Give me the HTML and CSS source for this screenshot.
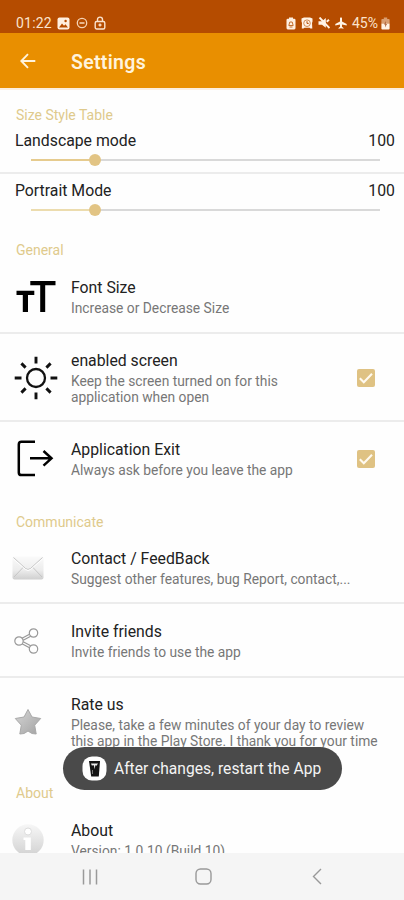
FILE: index.html
```html
<!DOCTYPE html>
<html lang="en">

<head>
    <meta charset="UTF-8">
    <meta name="viewport" content="width=device-width, initial-scale=1.0">
    <title>Settings</title>
    <link rel="stylesheet" href="styles.css">
</head>

<body>
    <div class="status">
        <span class="clock">01:22</span>
        <svg class="st-image" width="13" height="13" viewBox="0 0 13 13"><rect x="0.5" y="0.5" width="12" height="12" rx="2" fill="#fff0e0"/><path d="M2 10.5l3-4 2 2.2 1.5-1.5 2.5 3.3z" fill="#b54c00"/><circle cx="8.6" cy="4" r="1.2" fill="#b54c00"/></svg>
        <svg class="st-dnd" width="12" height="12" viewBox="0 0 12 12" fill="none" stroke="#f5d3b4" stroke-width="1.3"><circle cx="6" cy="6" r="4.7"/><path d="M3.5 6h5" stroke-width="1.6"/></svg>
        <svg class="st-lock" width="12" height="14" viewBox="0 0 12 14" fill="none" stroke="#fbe3cd" stroke-width="1.4"><rect x="1.2" y="5.5" width="9.6" height="7.5" rx="1.5"/><path d="M3.5 5.5V3.6a2.5 2.5 0 0 1 5 0v1.9M6 7.5v3M4.5 9h3"/></svg>
        <div class="status-right">
            <svg width="10" height="13" viewBox="0 0 10 13"><path d="M3 .5h4v1.300h1.200q1.300 0 1.300 1.300v8q0 1.400-1.300 1.400H1.800Q.5 12.500.5 11.100V3.100Q.5 1.800 1.800 1.800H3z" fill="#ffefe0"/><path d="M2.800 8.500l1-3.500h2.400l1 3.500zM3.500 10h3" fill="none" stroke="#c4702f" stroke-width="1"/></svg>
            <svg width="12" height="12" viewBox="0 0 12 12"><path d="M.5 1.500L3 .5h6l2.500 1v3L11 6l.3 5.500H9.500l-1-.7h-5l-1 .7H.8L1 6 .5 4.500z" fill="#fff3e6"/><circle cx="6" cy="6.200" r="3.300" fill="none" stroke="#c4702f" stroke-width=".8"/><path d="M6 4.200v2.200h1.700" fill="none" stroke="#b54c00" stroke-width="1"/></svg>
            <svg width="12" height="12" viewBox="0 0 12 12"><path d="M.5 4.200h3.500L7.800 1v9.800L4 7.800H.5z" fill="#fff3e6"/><path d="M1.500 .5l10 10.500M8.700 4.800l2.300-2" stroke="#fff3e6" stroke-width="1.900"/></svg>
            <svg width="12" height="12" viewBox="0 0 12 12"><path d="M5 1.200q1-1.700 2 0v3.300l4.700 2.500v1.500L7 7.500v2.200l1.500 1.200v.9L6 11.300l-2.500.5v-.9L5 9.700V7.500L.3 8.500V7L5 4.500z" fill="#fff3e6"/></svg>
            <span class="percent">45%</span>
            <svg class="st-battery" width="9" height="13" viewBox="0 0 9 13"><path d="M2.800.5h3.400v1.500H8q.6 0 .6 1v3.500H.4V3q0-1 .6-1h1.800z" fill="#d99d70"/><path d="M.4 6.500h8.200v5q0 1-.9 1H1.300q-.9 0-.9-1z" fill="#fff3e6"/><path d="M4.900 4L3 7.500h1.300L4 10.500 6 7H4.700z" fill="#a85a30"/></svg>
        </div>
    </div>

    <div class="header">
        <svg width="16" height="16" viewBox="0 0 16 16" fill="none" stroke="#fff3dc" stroke-width="1.900"><path d="M15.300 8H1.500M8 1.200L1.300 8 8 14.800"/></svg>
        <h1>Settings</h1>
    </div>

    <div class="content">
        <h2>Size Style Table</h2>
        <div class="size-row line">
            <div class="size-label"><span>Landscape mode</span><span class="num">100</span></div>
            <div class="slider"><div class="fill"></div><div class="knob"></div></div>
        </div>
        <div class="size-row second">
            <div class="size-label"><span>Portrait Mode</span><span class="num">100</span></div>
            <div class="slider pale"><div class="fill"></div><div class="knob"></div></div>
        </div>

        <h2>General</h2>
        <div class="row h74 line">
            <div class="icon"><svg width="40" height="32" viewBox="0 0 40 32"><path d="M14.300 0H39.500v4.200H29.200V31h-5V4.200h-9.900zM.5 9.800h17.800v4.200H12V31H6.800V14H.5z"/></svg></div>
            <div class="text"><h3>Font Size</h3><p>Increase or Decrease Size</p></div>
        </div>
        <div class="row h88 line">
            <div class="icon sun"><svg width="44" height="44" viewBox="0 0 44 44" fill="none" stroke="#111" stroke-width="2.900"><circle cx="22" cy="22" r="9" stroke-width="2.300"/><path d="M22 .7v6.800M22 36.500v6.800M.7 22h6.800M36.500 22h6.800M7.400 7.400l4.200 4.200M32.400 32.400l4.200 4.200M36.600 7.400l-4.200 4.200M11.600 32.400l-4.200 4.200"/></svg></div>
            <div class="text"><h3>enabled screen</h3><p>Keep the screen turned on for this<br>application when open</p></div>
            <div class="check"><svg width="18" height="18" viewBox="0 0 18 18" fill="none" stroke="#fffaf0" stroke-width="2.100"><path d="M2.800 9.200l4 4 8.200-8.400"/></svg></div>
        </div>
        <div class="row h75 last">
            <div class="icon exit"><svg width="37" height="37" viewBox="0 0 37 37" fill="none" stroke="#000" stroke-width="2.500"><path d="M18 1.700H4.500q-2.700 0-2.700 2.700v28q0 2.700 2.700 2.700H18M13 18.300h22M26.500 11l8 7.300-8 7.300"/></svg></div>
            <div class="text"><h3>Application Exit</h3><p>Always ask before you leave the app</p></div>
            <div class="check"><svg width="18" height="18" viewBox="0 0 18 18" fill="none" stroke="#fffaf0" stroke-width="2.100"><path d="M2.800 9.200l4 4 8.200-8.400"/></svg></div>
        </div>

        <h2>Communicate</h2>
        <div class="row h72 line">
            <div class="icon small">
                <svg width="32" height="24" viewBox="0 0 32 24">
                    <defs><linearGradient id="mail" x1="0" y1="0" x2="0" y2="1"><stop offset="0" stop-color="#fafafa"/><stop offset=".6" stop-color="#ececec"/><stop offset="1" stop-color="#cfcfcf"/></linearGradient></defs>
                    <rect x=".5" y=".5" width="31" height="23" rx="2" fill="url(#mail)"/>
                    <path d="M1.500 1.500L13.500 12.500q2.500 2 5 0L30.500 1.500M2 21l9.500-10M30 21l-9.500-10" fill="none" stroke="#c6c6c6"/>
                    <path d="M1.500 3L13.500 13.500q2.500 2 5 0L30.500 3" fill="none" stroke="#fff"/>
                </svg>
            </div>
            <div class="text"><h3>Contact / FeedBack</h3><p>Suggest other features, bug Report, contact,...</p></div>
        </div>
        <div class="row h74 line">
            <div class="icon share"><svg width="26" height="26" viewBox="0 0 26 26" fill="none" stroke="#999" stroke-width="1.200"><circle cx="5" cy="13" r="4.200"/><circle cx="19.500" cy="5" r="4.200"/><circle cx="19.500" cy="21" r="4.200"/><path d="M8 10.200l7.500-4M9.200 12.200l7.500-4M8 15.800l7.500 4M9.200 13.800l7.500 4"/></svg></div>
            <div class="text"><h3>Invite friends</h3><p>Invite friends to use the app</p></div>
        </div>
        <div class="row h90 last">
            <div class="icon star">
                <svg width="28" height="28" viewBox="0 0 28 28">
                    <defs><linearGradient id="star" x1="0" y1="0" x2="1" y2="1"><stop offset="0" stop-color="#d6d6d6"/><stop offset="1" stop-color="#a2a2a2"/></linearGradient></defs>
                    <path d="M14 1.500l4 7.500 8.700 1.500-6 6.700 1.500 8.800q-4.500.5-8.200-3-3.700 3.500-8.200 3l1.500-8.800-6-6.700L10 9z" fill="url(#star)" stroke="#a9a9a9" stroke-linejoin="round"/>
                </svg>
            </div>
            <div class="text"><h3>Rate us</h3><p>Please, take a few minutes of your day to review<br>this app in the Play Store. I thank you for your time</p></div>
        </div>

        <h2>About</h2>
        <div class="row h74">
            <div class="icon small">
                <svg width="32" height="32" viewBox="0 0 32 32">
                    <defs><linearGradient id="info" x1="0" y1="0" x2="0" y2="1"><stop offset="0" stop-color="#f7f7f7"/><stop offset="1" stop-color="#d2d2d2"/></linearGradient></defs>
                    <circle cx="16" cy="16" r="15.700" fill="url(#info)"/>
                    <circle cx="16" cy="7.500" r="3.500" fill="#fff" stroke="#ddd"/>
                    <path d="M11.500 13.500h7.300V26h-5.500V16h-1.800z" fill="#fff"/>
                </svg>
            </div>
            <div class="text"><h3>About</h3><p>Version: 1.0.10 (Build 10)</p></div>
        </div>
    </div>

    <div class="navbar">
        <svg width="16" height="16" viewBox="0 0 16 16" stroke="#9a9a9a" stroke-width="1.500"><path d="M1.500 .5v15M8 .5v15M14.500 .5v15"/></svg>
        <svg class="home" width="17" height="17" viewBox="0 0 17 17" fill="none" stroke="#999" stroke-width="1.400"><rect x="1" y="1" width="15" height="15" rx="4.500"/></svg>
        <svg width="10" height="17" viewBox="0 0 10 17" fill="none" stroke="#999" stroke-width="1.400"><path d="M9 1L1.500 8.500 9 16"/></svg>
    </div>

    <div class="toast">
        <svg width="25" height="25" viewBox="0 0 25 25"><rect x=".5" y=".5" width="24" height="24" rx="9.500" fill="#fff"/><path d="M7 5h11l-1.200 15.500H9.200z" fill="#151515"/><path d="M9 7.500h7l-1.500 2.300-1.200-.5-.5 4-1-4-2 .3z" fill="#eee"/><path d="M10.500 14v4" stroke="#777"/></svg>
        <span>After changes, restart the App</span>
    </div>
</body>

</html>
```
FILE: styles.css
```css
body {
    margin: 0;
    height: 900px;
    position: relative;
    display: flex;
    flex-direction: column;
    overflow: hidden;
    background-color: #fefefe;
    font-family: Roboto, "Liberation Sans", sans-serif;
}

h1, h2, h3, p {
    margin: 0;
    font-weight: 400;
}

svg {
    display: block;
    flex: none;
}

.status {
    height: 33px;
    padding: 13px 14px 0 16px;
    box-sizing: border-box;
    display: flex;
    align-items: center;
    background-color: #b54c00;
    color: #fbe3cd;
    font-size: 14px;
}

.clock {
    width: 41px;
    letter-spacing: 0.2px;
}

.st-dnd {
    margin-left: 6px;
}

.st-lock {
    margin-left: 6px;
}

.status-right {
    margin-left: auto;
    display: flex;
    align-items: center;
    gap: 5px;
}

.percent {
    width: 28px;
}

.st-battery {
    margin-left: -4px;
}

.header {
    height: 55px;
    padding: 1px 0 0 20px;
    box-sizing: border-box;
    display: flex;
    align-items: center;
    background-color: #e98f00;
}

.header h1 {
    margin: 2px 0 0 35px;
    color: #fff3dc;
    font-size: 19.5px;
    font-weight: 600;
    letter-spacing: 0.3px;
}

.content {
    height: 765px;
    box-sizing: border-box;
    overflow: hidden;
    border-top: 2px solid #fdeedd;
}

h2 {
    height: 35px;
    padding: 17px 16px 0;
    box-sizing: border-box;
    color: #dfca8c;
    font-size: 14px;
    line-height: 16px;
}

.line {
    border-bottom: 2px solid #ececec;
}

.size-row {
    height: 49px;
    padding: 6px 9px 0 15px;
    box-sizing: border-box;
}

.size-row.second {
    height: 51px;
    padding-top: 7px;
}

.size-label {
    display: flex;
    justify-content: space-between;
    color: #222;
    font-size: 15.8px;
    line-height: 20px;
}

.slider {
    height: 12px;
    margin: 3px 15px 0 16px;
    display: flex;
    align-items: center;
    background: linear-gradient(#d9d9d9, #d9d9d9) center / 100% 2px no-repeat;
}

.slider .fill {
    width: 58px;
    height: 2px;
    background-color: #e6cb8e;
}

.slider.pale .fill {
    background-color: #ecdcae;
}

.knob {
    width: 12px;
    height: 12px;
    border-radius: 50%;
    background-color: #e2c484;
}

.row {
    padding-left: 16px;
    box-sizing: border-box;
    display: flex;
    align-items: center;
}

.row.line {
    padding-top: 2px;
}

.row.last {
    padding-bottom: 2px;
}

.h72 { height: 72px; }
.h74 { height: 74px; }
.h75 { height: 75px; }
.h88 { height: 88px; }
.h90 { height: 90px; }

.icon {
    width: 55px;
    flex: none;
}

.icon.sun {
    margin-left: -2px;
    width: 57px;
}

.icon.exit {
    margin-left: 1px;
    width: 54px;
}

.icon.small {
    margin-left: -4px;
    width: 59px;
}

.icon.share, .icon.star {
    margin-left: -2px;
    width: 57px;
}

.text {
    white-space: nowrap;
}

.text h3 {
    color: #222;
    font-size: 15.8px;
    line-height: 20px;
}

.text p {
    margin-top: 2px;
    color: #777;
    font-size: 13.8px;
    line-height: 16px;
}

.check {
    width: 18px;
    height: 18px;
    margin-left: auto;
    margin-right: 29px;
    border-radius: 2px;
    background-color: #dfc283;
}

.navbar {
    height: 47px;
    padding: 0 82px;
    display: flex;
    align-items: center;
    justify-content: space-between;
    background-color: #f5f5f5;
}

.navbar .home {
    margin-right: 4px;
}

.toast {
    position: absolute;
    left: 63px;
    top: 747px;
    width: 279px;
    height: 43px;
    padding-left: 19px;
    box-sizing: border-box;
    display: flex;
    align-items: center;
    border-radius: 22px;
    background-color: #4a4a4a;
    color: #f4f4f4;
    font-size: 15.6px;
    white-space: nowrap;
}

.toast span {
    margin-left: 7px;
}
```
